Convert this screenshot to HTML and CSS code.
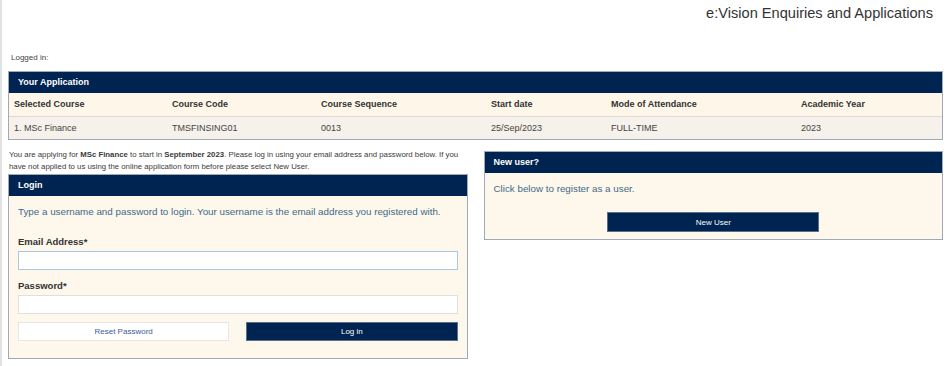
FILE: index.html
```html
<!DOCTYPE html>
<html lang="en">
<head>
  <meta charset="UTF-8" />
  <title>e:Vision Enquiries and Applications</title>
  <link rel="stylesheet" href="styles.css">
</head>
<body>
  <div class="page">
    <div class="site-title">e:Vision Enquiries and Applications</div>

    <div class="logged-in">Logged in:</div>

    <div class="panel app-panel">
      <div class="panel-head">Your Application</div>
      <table class="app-table">
        <colgroup>
          <col class="c1"><col class="c2"><col class="c3"><col class="c4"><col class="c5"><col>
        </colgroup>
        <tr class="head-row">
          <th>Selected Course</th>
          <th>Course Code</th>
          <th>Course Sequence</th>
          <th>Start date</th>
          <th>Mode of Attendance</th>
          <th>Academic Year</th>
        </tr>
        <tr class="data-row">
          <td>1. MSc Finance</td>
          <td>TMSFINSING01</td>
          <td>0013</td>
          <td>25/Sep/2023</td>
          <td>FULL-TIME</td>
          <td>2023</td>
        </tr>
      </table>
    </div>

    <div class="columns">
      <div class="col-left">
        <p class="intro">You are applying for <b>MSc Finance</b> to start in <b>September 2023</b>. Please log in using your email address and password below. If you have not applied to us using the online application form before please select New User.</p>

        <div class="panel">
          <div class="panel-head">Login</div>
          <div class="panel-body login-body">
            <p class="hint">Type a username and password to login. Your username is the email address you registered with.</p>

            <label class="field-label first" for="email">Email Address*</label>
            <input class="field focused" id="email" type="text">

            <label class="field-label" for="pw">Password*</label>
            <input class="field" id="pw" type="password">

            <div class="btn-row">
              <button class="btn btn-light">Reset Password</button>
              <button class="btn btn-dark">Log in</button>
            </div>
          </div>
        </div>
      </div>

      <div class="col-right">
        <div class="panel">
          <div class="panel-head">New user?</div>
          <div class="panel-body new-body">
            <p class="hint">Click below to register as a user.</p>
            <div class="center">
              <button class="btn btn-dark btn-new">New User</button>
            </div>
          </div>
        </div>
      </div>
    </div>
  </div>
</body>
</html>
```

FILE: styles.css
```css
* {
  margin: 0;
  padding: 0;
  box-sizing: border-box;
}

html {
  border-left: 2px solid #e2e2e2;
  min-height: 100%;
}

body {
  font-family: "Liberation Sans", Arial, sans-serif;
  color: #333;
  background: #fff;
}

.page {
  padding: 0 7px 0 6px;
}

.site-title {
  text-align: right;
  font-size: 14.6px;
  padding: 5px 10px 0 0;
  height: 53px;
  color: #333;
}

.logged-in {
  font-size: 8px;
  color: #444;
  height: 18px;
  padding-left: 3px;
}

.panel {
  border: 1px solid #9fa9b8;
  background: #fdf7ec;
}

.panel-head {
  background: #002452;
  color: #fff;
  font-weight: bold;
  font-size: 9px;
  height: 21px;
  line-height: 21px;
  padding-left: 9px;
}

.app-table {
  width: 100%;
  border-collapse: collapse;
  table-layout: fixed;
  font-size: 9px;
}

.app-table .c1 { width: 158px; }
.app-table .c2 { width: 149px; }
.app-table .c3 { width: 170px; }
.app-table .c4 { width: 120px; }
.app-table .c5 { width: 190px; }

.app-table th,
.app-table td {
  text-align: left;
  padding: 0 5px;
}

.head-row th {
  height: 23px;
  background: #fdf6e9;
  border-bottom: 1px solid #dcdad6;
  color: #333;
}

.data-row td {
  height: 23px;
  background: #f6f1ea;
  color: #444;
}

.columns {
  display: flex;
  gap: 16px;
  margin-top: 9px;
}

.col-left,
.col-right {
  flex: 1;
}

.col-right {
  padding-top: 2px;
}

.intro {
  font-size: 7.8px;
  line-height: 12px;
  color: #3a3a3a;
  padding-left: 1px;
  margin-bottom: 1px;
}

.login-body {
  padding: 9px 9px 17px;
}

.hint {
  font-size: 9.8px;
  color: #3d6b88;
  line-height: 14px;
}

.field-label {
  display: block;
  font-weight: bold;
  font-size: 9.5px;
  line-height: 11px;
  color: #333;
  margin-top: 10px;
  margin-bottom: 4px;
}

.field-label.first {
  margin-top: 17px;
}

.field {
  display: block;
  width: 100%;
  height: 19px;
  border: 1px solid #e1dfdc;
  background: #fff;
  outline: none;
}

.field.focused {
  border-color: #a9c8e4;
}

.btn-row {
  display: flex;
  gap: 17px;
  margin-top: 8px;
}

.btn {
  flex: 1;
  height: 19px;
  font-family: "Liberation Sans", Arial, sans-serif;
  font-size: 8px;
  cursor: pointer;
}

.btn-light {
  background: #fff;
  border: 1px solid #eae7e2;
  color: #3a5c97;
}

.btn-dark {
  background: #002452;
  border: 1px solid #5c6f88;
  color: #fff;
}

.new-body {
  padding: 9px 9px 7px;
}

.center {
  display: flex;
  justify-content: center;
  margin-top: 16px;
}

.btn-new {
  flex: none;
  width: 212px;
  height: 20px;
}
```
